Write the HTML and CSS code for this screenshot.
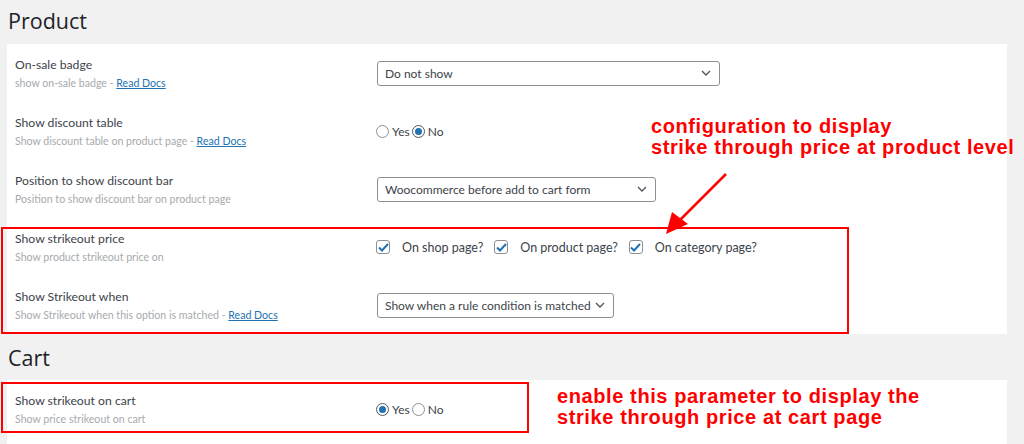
FILE: index.html
```html
<!DOCTYPE html>
<html lang="en">
<head>
  <meta charset="UTF-8" />
  <meta name="viewport" content="width=device-width, initial-scale=1.0"/>
  <title>Discount Rules Settings</title>
  <link rel="stylesheet" href="styles.css">
</head>
<body>
  <div class="page">
    <h2 class="section-title">Product</h2>
    <div class="panel">
      <div class="row">
        <div class="label-col">
          <div class="label">On-sale badge</div>
          <div class="desc">show on-sale badge - <a href="#">Read Docs</a></div>
        </div>
        <div class="field">
          <div class="select select-wide">
            <span>Do not show</span>
            <svg width="10" height="6" viewBox="0 0 10 6"><path d="M1 1l4 4 4-4" fill="none" stroke="#50575e" stroke-width="1.4"/></svg>
          </div>
        </div>
      </div>

      <div class="row">
        <div class="label-col">
          <div class="label">Show discount table</div>
          <div class="desc">Show discount table on product page - <a href="#">Read Docs</a></div>
        </div>
        <div class="field">
          <span class="radio"></span><span class="opt">Yes</span>
          <span class="radio checked"></span><span class="opt">No</span>
        </div>
      </div>

      <div class="row">
        <div class="label-col">
          <div class="label">Position to show discount bar</div>
          <div class="desc">Position to show discount bar on product page</div>
        </div>
        <div class="field">
          <div class="select select-mid">
            <span>Woocommerce before add to cart form</span>
            <svg width="10" height="6" viewBox="0 0 10 6"><path d="M1 1l4 4 4-4" fill="none" stroke="#50575e" stroke-width="1.4"/></svg>
          </div>
        </div>
      </div>

      <div class="row">
        <div class="label-col">
          <div class="label">Show strikeout price</div>
          <div class="desc">Show product strikeout price on</div>
        </div>
        <div class="field">
          <span class="check"><svg width="11" height="9" viewBox="0 0 11 9"><path d="M1 4.5l3 3L10 1" fill="none" stroke="#2271b1" stroke-width="2"/></svg></span>
          <span class="check-text">On shop page?</span>
          <span class="check"><svg width="11" height="9" viewBox="0 0 11 9"><path d="M1 4.5l3 3L10 1" fill="none" stroke="#2271b1" stroke-width="2"/></svg></span>
          <span class="check-text">On product page?</span>
          <span class="check"><svg width="11" height="9" viewBox="0 0 11 9"><path d="M1 4.5l3 3L10 1" fill="none" stroke="#2271b1" stroke-width="2"/></svg></span>
          <span class="check-text">On category page?</span>
        </div>
      </div>

      <div class="row">
        <div class="label-col">
          <div class="label">Show Strikeout when</div>
          <div class="desc">Show Strikeout when this option is matched - <a href="#">Read Docs</a></div>
        </div>
        <div class="field">
          <div class="select select-small">
            <span>Show when a rule condition is matched</span>
            <svg width="10" height="6" viewBox="0 0 10 6"><path d="M1 1l4 4 4-4" fill="none" stroke="#50575e" stroke-width="1.4"/></svg>
          </div>
        </div>
      </div>
    </div>

    <h2 class="section-title cart-title">Cart</h2>
    <div class="panel panel-last">
      <div class="row">
        <div class="label-col">
          <div class="label">Show strikeout on cart</div>
          <div class="desc">Show price strikeout on cart</div>
        </div>
        <div class="field">
          <span class="radio checked"></span><span class="opt">Yes</span>
          <span class="radio"></span><span class="opt">No</span>
        </div>
      </div>
    </div>

    <!-- annotations drawn over the screenshot -->
    <div class="mark mark-product"></div>
    <div class="mark mark-cart"></div>
    <div class="note note-product">configuration to display<br>strike through price at product level</div>
    <div class="note note-cart">enable this parameter to display the<br>strike through price at cart page</div>
    <svg class="arrow" width="70" height="70" viewBox="0 0 70 70">
      <line x1="66" y1="2" x2="18" y2="50" stroke="#ff0000" stroke-width="2.5"/>
      <polygon points="6,62 12,40 28,52" fill="#ff0000"/>
    </svg>
  </div>
</body>
</html>
```

FILE: styles.css
```css
body {
  margin: 0;
  background-color: #f1f1f1;
  font-family: Lato, 'Open Sans', sans-serif;
  color: #3c434a;
}

.page {
  position: relative;
  width: 1024px;
  height: 444px;
  overflow: hidden;
}

.section-title {
  margin: 0;
  padding-left: 8px;
  height: 44px;
  line-height: 42px;
  font-family: 'Open Sans', sans-serif;
  font-size: 21.5px;
  font-weight: 500;
  color: #1d2327;
}

.cart-title {
  height: 46px;
  line-height: 48px;
}

.panel {
  background-color: #fff;
  margin-left: 7px;
  width: 1000px;
  padding: 0 8px;
  box-sizing: border-box;
}

.panel-last {
  height: 80px;
}

.row {
  display: flex;
  align-items: center;
  height: 58px;
}

.label-col {
  width: 362px;
  padding-top: 2px;
}

.label {
  font-size: 12.2px;
  line-height: 18px;
  color: #3c434a;
}

.desc {
  font-size: 10.6px;
  line-height: 18px;
  color: #a7aaad;
}

.desc a {
  color: #2271b1;
}

.field {
  display: flex;
  align-items: center;
  font-size: 12px;
  color: #3c434a;
  white-space: nowrap;
}

.select {
  display: flex;
  align-items: center;
  justify-content: space-between;
  height: 25px;
  box-sizing: border-box;
  padding: 0 8px 0 7px;
  border: 1px solid #8c8f94;
  border-radius: 3px;
  font-size: 12px;
}

.select-wide { width: 343px; }
.select-mid { width: 279px; }
.select-small { width: 237px; }

.radio {
  width: 13px;
  height: 13px;
  box-sizing: border-box;
  border: 1px solid #8c8f94;
  border-radius: 50%;
  margin: 0 3px 0 -1px;
  position: relative;
}

.radio.checked {
  border-color: #50575e;
}

.radio.checked::after {
  content: "";
  position: absolute;
  top: 2px;
  left: 2px;
  width: 7px;
  height: 7px;
  border-radius: 50%;
  background-color: #2271b1;
}

.opt {
  margin-right: 3px;
}

.check {
  display: flex;
  align-items: center;
  justify-content: center;
  width: 14px;
  height: 14px;
  box-sizing: border-box;
  border: 1px solid #8c8f94;
  border-radius: 3px;
  margin-left: -1px;
}

.check-text {
  margin: 0 12px 0 12px;
  font-size: 12.5px;
}

.mark {
  position: absolute;
  border: 2px solid #ff0000;
  box-sizing: border-box;
}

.mark-product {
  left: 1px;
  top: 227px;
  width: 848px;
  height: 107px;
}

.mark-cart {
  left: 1px;
  top: 382px;
  width: 528px;
  height: 51px;
}

.note {
  position: absolute;
  font-family: 'Liberation Sans', Arial, sans-serif;
  font-weight: bold;
  font-size: 20px;
  letter-spacing: 0.6px;
  line-height: 21px;
  color: #ff0000;
}

.note-product {
  left: 651px;
  top: 116px;
}

.note-cart {
  left: 557px;
  top: 386px;
}

.arrow {
  position: absolute;
  left: 660px;
  top: 172px;
}
```
